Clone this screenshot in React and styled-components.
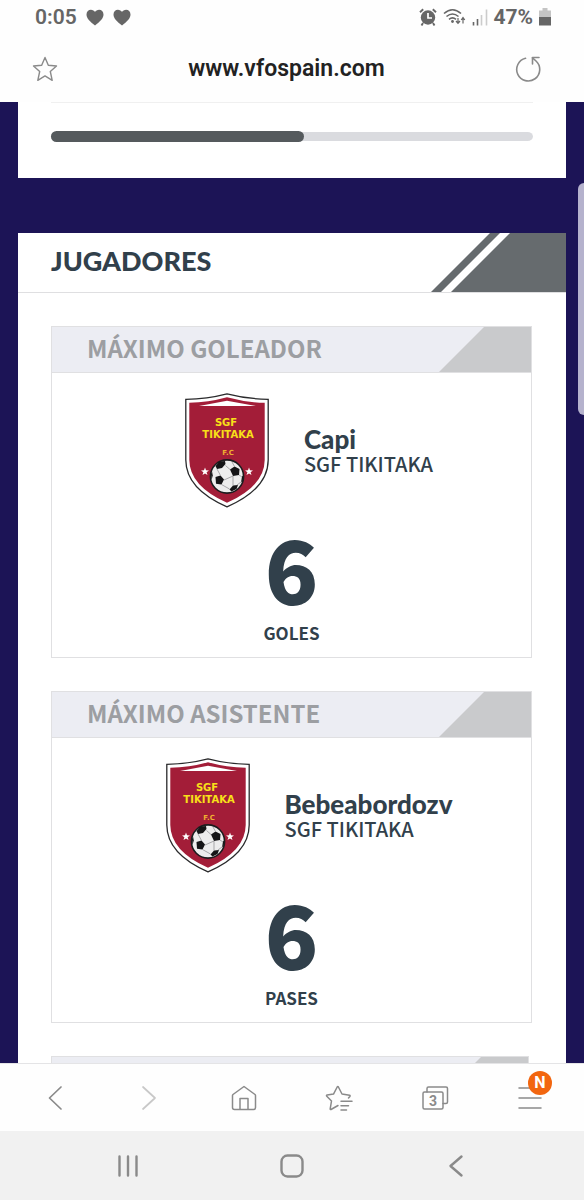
import styled, { createGlobalStyle, css } from 'styled-components';

const players = [
    { id: 1, title: 'MÁXIMO GOLEADOR', name: 'Capi', team: 'SGF TIKITAKA', total: 6, unit: 'GOLES' },
    { id: 2, title: 'MÁXIMO ASISTENTE', name: 'Bebeabordozv', team: 'SGF TIKITAKA', total: 6, unit: 'PASES' },
];

const App = () => {
    return (
        <Screen>
            <GlobalStyle />
            <StatusBar />
            <AddressBar />
            <Content>
                <Wrapper>
                    <Card>
                        <ProgressBox>
                            <Progress>
                                <ProgressFill style={{ width: '52.4%' }} />
                            </Progress>
                        </ProgressBox>
                    </Card>
                    <Card>
                        <CardHeader>
                            <CardTitle>JUGADORES</CardTitle>
                            <Stripes>
                                <Stripe />
                                <StripeEnd />
                            </Stripes>
                        </CardHeader>
                        <CardBody>
                            {players.map((player) => (
                                <Player key={player.id} player={player} />
                            ))}
                            <Panel $narrow>
                                <PanelHeader>
                                    <PanelTitle>PORTERÍA</PanelTitle>
                                    <Corner />
                                </PanelHeader>
                            </Panel>
                        </CardBody>
                    </Card>
                </Wrapper>
                <ScrollThumb />
            </Content>
            <BrowserBar />
            <SystemBar />
        </Screen>
    );
};

const StatusBar = () => {
    return (
        <Status>
            <StatusGroup>
                <span>0:05</span>
                <Heart />
                <Heart />
            </StatusGroup>
            <StatusIcons>
                <svg width="18" height="18" viewBox="0 0 18 18">
                    <circle cx="9" cy="9.500" r="7.200" fill="#666" />
                    <path d="M9 5v5h4" fill="none" stroke="#fff" strokeWidth="1.700" />
                    <path d="M1 4.200 4.200 1.200M17 4.200l-3.200-3M4 15l-1.500 2.500M14 15l1.500 2.500" stroke="#666" strokeWidth="1.900" />
                </svg>
                <svg width="23" height="18" viewBox="0 0 23 18">
                    <g fill="none" stroke="#666" strokeWidth="1.600">
                        <path d="M1 5.500Q9.500-2 18 5.500" />
                        <path d="M3.500 8.500q6-5 12 0" />
                        <path d="M6 11.300q3.500-2.800 7 0" />
                        <path d="M15 10v5M13 13l2 2.400 2-2.400M20 15.500V10M18.200 12l1.800-2.400 1.800 2.400" strokeWidth="1.200" />
                    </g>
                    <circle cx="9.500" cy="13.500" r="1.400" fill="#666" />
                </svg>
                <svg width="17" height="18" viewBox="0 0 17 18">
                    <path d="M1.500 14v3.500M5.500 11v6.500" stroke="#666" strokeWidth="1.600" />
                    <path d="M9.500 7v10.500M14.500 1.500v16" stroke="#ccc" strokeWidth="1.600" />
                </svg>
                <Percent>47%</Percent>
                <svg width="12" height="18" viewBox="0 0 12 18">
                    <path d="M3.500 0h5v2.500H12V9H0V2.500h3.500z" fill="#c4c4c4" />
                    <path d="M0 9h12v8.500H0z" fill="#666" />
                </svg>
            </StatusIcons>
        </Status>
    );
};

const Heart = () => (
    <svg width="18" height="17" viewBox="0 0 18 17">
        <path d="M9 16.500C4 12.500.5 9.500.5 5.500.5 2.500 2.500.8 4.900.8 6.700.8 8.200 1.700 9 3.100 9.800 1.700 11.300.8 13.100.8c2.400 0 4.400 1.700 4.400 4.700 0 4-3.500 7-8.500 11z" fill="#666" />
    </svg>
);

const AddressBar = () => {
    return (
        <Address>
            <IconButton type="button" aria-label="Favorito">
                <svg width="26" height="26" viewBox="0 0 26 26">
                    <path d="m13 1.500 3.300 7.700 8.200.8-6.200 5.500 1.900 8.800-7.200-4.400-7.200 4.400 1.900-8.800L1.500 10l8.200-.8z" {...line} strokeWidth="1.400" />
                </svg>
            </IconButton>
            <Url>www.vfospain.com</Url>
            <IconButton type="button" aria-label="Recargar">
                <svg width="26" height="26" viewBox="0 0 26 26">
                    <path d="M10.500 2.300A11.500 11.500 0 1 0 21 5L17.500 1.800" {...line} strokeWidth="1.600" />
                    <path d="M24 1.500h-6.500V8" {...line} strokeWidth="1.600" />
                </svg>
            </IconButton>
        </Address>
    );
};

const Player = ({ player }) => {
    return (
        <Panel>
            <PanelHeader>
                <PanelTitle>{player.title}</PanelTitle>
                <Corner />
            </PanelHeader>
            <PlayerRow>
                <Shield />
                <div>
                    <PlayerName>{player.name}</PlayerName>
                    <PlayerTeam>{player.team}</PlayerTeam>
                </div>
            </PlayerRow>
            <Total>{player.total}</Total>
            <Unit>{player.unit}</Unit>
        </Panel>
    );
};

const star = 'm0-4 1 2.800 3 .1-2.400 1.800.9 2.900L0 2 -2.500 3.600l.9-2.900L-4-1.100l3-.1z';

const Shield = () => (
    <svg width="84" height="115" viewBox="0 0 84 115">
        <path d="M42 .8Q22 6 .8 6.300V67Q1 96 42 113.800 83 96 83.200 67V6.300Q62 6 42 .8z" fill="#fff" stroke="#2a2a2c" strokeWidth="1.300" />
        <path d="M42 4.300Q23 9.500 4.300 9.800V67Q4.500 93 42 109.800 79.500 93 79.700 67V9.800Q61 9.500 42 4.300z" fill="#a31d38" />
        <path d="M42 7.800 71 13H14z" fill="#fff" />
        <g fontFamily="'DejaVu Sans', sans-serif" fontWeight="bold" textAnchor="middle">
            <text x="41" y="33" fontSize="10" fill="#f8e018">SGF</text>
            <text x="43" y="45" fontSize="10" fill="#f8e018">TIKITAKA</text>
            <text x="43" y="62" fontSize="7" fill="#f0b030">F.C</text>
        </g>
        <path d={star} transform="translate(20 78.500)" fill="#fff" />
        <path d={star} transform="translate(64 78.500)" fill="#fff" />
        <circle cx="42" cy="83.500" r="16.600" fill="#ededed" stroke="#1c1c1e" strokeWidth="1.600" />
        <g fill="#151517">
            <path d="m30.500 73 4-4.500 5.500-.5 .5 3-3.500 4-5 1z" />
            <path d="m45 76.500 4.500-3 5 2.500-.5 6-6 1z" />
            <path d="m30.500 84 5-1.500 3.500 4-2.500 5-5.500-.8z" />
            <path d="m44.500 96.500 3.500-4 5-.5-1.500 4-5 2.500z" />
            <path d="m26 81 1-2.500 .8 4L26.500 87z" />
            <path d="m57 83.500 1.300-1-.5 5-1.800 2z" />
        </g>
        <path d="M40.500 72.500l4.500 4M48 83l-9 4M32 76l3.500 6.500M54 82l3 2M36.500 91.500l8 4.500M52 92l4-3M48 83v9.500M49.500 73.500 47 69" fill="none" stroke="#8a8a8e" strokeWidth=".7" />
    </svg>
);

const BrowserBar = () => {
    return (
        <Toolbar>
            <IconButton type="button" aria-label="Atrás">
                <svg width="26" height="26" viewBox="0 0 26 26">
                    <path d="M19 2 7.500 13 19 24" {...line} strokeWidth="1.700" />
                </svg>
            </IconButton>
            <IconButton type="button" aria-label="Adelante">
                <svg width="26" height="26" viewBox="0 0 26 26">
                    <path d="m7 2 12 11L7 24" {...line} stroke="#c8c8c8" strokeWidth="1.700" />
                </svg>
            </IconButton>
            <IconButton type="button" aria-label="Inicio">
                <svg width="26" height="26" viewBox="0 0 26 26">
                    <path d="M13 1.500 24 9.500q.5.500.5 1V22.500q0 2-2 2h-19q-2 0-2-2v-12q0-.5.500-1zM9 24.500V13.500h8v11" {...line} />
                </svg>
            </IconButton>
            <IconButton type="button" aria-label="Favoritos">
                <svg width="28" height="26" viewBox="0 0 28 26">
                    <path d="M13 20.500 6 24.500q-.8.300-.8-.6L6.500 16 1.800 11.300q-.8-1 .4-1.200l6.300-1L12.200 2q.6-1 1.200 0L17 9l7.500 1.200q1 .3.400 1.200L23.500 13M16 16.200h11M16 20.700h7.500M16 25h5.500" {...line} />
                </svg>
            </IconButton>
            <IconButton type="button" aria-label="Pestañas">
                <svg width="28" height="26" viewBox="0 0 28 26">
                    <path d="M5 7V3.500Q5 2 6.500 2H24q1.500 0 1.500 1.500V17q0 1.500-1.500 1.500h-3" {...line} />
                    <rect x="1" y="7" width="20" height="17" rx="1.500" {...line} />
                    <text x="11" y="20.500" fontSize="14" fontWeight="bold" fontFamily="Roboto, sans-serif" textAnchor="middle" fill="#8a8a8a">3</text>
                </svg>
            </IconButton>
            <IconButton type="button" aria-label="Menú">
                <svg width="24" height="26" viewBox="0 0 24 26">
                    <path d="M1 3h22M1 13h22M1 23h22" {...line} />
                </svg>
                <Badge>N</Badge>
            </IconButton>
        </Toolbar>
    );
};

const SystemBar = () => {
    return (
        <System>
            <IconButton type="button" aria-label="Recientes">
                <svg width="24" height="24" viewBox="0 0 24 24">
                    <path d="M3.500 2.500v19M12 2.500v19M20.500 2.500v19" {...line} strokeWidth="2.400" />
                </svg>
            </IconButton>
            <IconButton type="button" aria-label="Pantalla de inicio">
                <svg width="24" height="24" viewBox="0 0 24 24">
                    <rect x="1.500" y="1.500" width="21" height="21" rx="6" {...line} strokeWidth="2.400" />
                </svg>
            </IconButton>
            <IconButton type="button" aria-label="Volver">
                <svg width="24" height="24" viewBox="0 0 24 24">
                    <path d="M17.500 2.500 6.500 12l11 9.500" {...line} strokeWidth="2.400" />
                </svg>
            </IconButton>
        </System>
    );
};

const line = {
    fill: 'none',
    stroke: '#8a8a8a',
    strokeWidth: 1.5,
    strokeLinejoin: 'round',
    strokeLinecap: 'round',
};

export default App;

const GlobalStyle = createGlobalStyle`
    * {
        box-sizing: border-box;
    }

    body {
        margin: 0;
        background-color: #fefefe;
        color: #31404b;
        font-family: "Noto Sans CJK SC", "Noto Sans", sans-serif;
    }

    svg {
        display: block;
        flex: none;
    }
`;

const Screen = styled.div`
    display: flex;
    flex-direction: column;
    height: 100vh;
`;

const Status = styled.div`
    display: flex;
    flex: none;
    align-items: center;
    justify-content: space-between;
    height: 34px;
    padding: 0 33px 0 35px;
    color: #666;
    font: 600 21px/34px Roboto, sans-serif;
`;

const StatusGroup = styled.div`
    display: flex;
    align-items: center;
    gap: 9px;
`;

const StatusIcons = styled.div`
    display: flex;
    align-items: center;
    gap: 6px;
`;

const Percent = styled.span`
    margin-left: -2px;
    font-weight: 700;
`;

const Address = styled.div`
    display: flex;
    flex: none;
    align-items: center;
    justify-content: space-between;
    height: 68px;
    padding: 2px 43px 0 32px;
`;

const IconButton = styled.button`
    position: relative;
    padding: 0;
    border: 0;
    background: none;
`;

const Url = styled.span`
    color: #222;
    font: 600 23px/32px Roboto, sans-serif;
`;

const Content = styled.main`
    position: relative;
    flex: 1;
    min-height: 0;
    overflow: hidden;
    background-color: #1c1456;
`;

const Wrapper = styled.div`
    display: flex;
    flex-direction: column;
    gap: 55px;
    padding: 0 18px;
`;

const Card = styled.section`
    background-color: #fff;
`;

const ProgressBox = styled.div`
    margin: 0 33px;
    padding: 28px 0 36px;
    border-top: 1px solid #f0f0f0;
`;

const Progress = styled.div`
    height: 11px;
    padding: 1px 0;
    border-radius: 6px;
    background-color: #dadbdf;
    background-clip: content-box;
`;

const ProgressFill = styled.div`
    height: 11px;
    margin-top: -1px;
    border-radius: 6px;
    background-color: #555a5d;
`;

const CardHeader = styled.header`
    display: flex;
    align-items: center;
    justify-content: space-between;
    height: 60px;
    padding-left: 33px;
    border-bottom: 1px solid #dfdfe1;
`;

const CardTitle = styled.h2`
    margin: 0;
    padding-bottom: 3px;
    font: 900 27px/32px Lato, sans-serif;
`;

const Stripes = styled.div`
    display: flex;
    align-self: stretch;
`;

const stripe = css`
    background-color: #666b6e;
`;

const Stripe = styled.div`
    ${stripe}
    width: 69px;
    clip-path: polygon(59px 0, 100% 0, 10px 100%, 0 100%);
`;

const StripeEnd = styled.div`
    ${stripe}
    width: 115px;
    margin-left: -49px;
    clip-path: polygon(59px 0, 100% 0, 100% 100%, 0 100%);
`;

const CardBody = styled.div`
    display: flex;
    flex-direction: column;
    gap: 33px;
    padding: 33px 34px 33px 33px;
`;

const Panel = styled.article`
    height: 332px;
    margin-right: ${({ $narrow }) => ($narrow ? '3px' : '0')};
    border: 1px solid #e0e0e2;
`;

const PanelHeader = styled.header`
    display: flex;
    align-items: center;
    justify-content: space-between;
    height: 46px;
    padding-left: 35px;
    border-bottom: 1px solid #e0e0e2;
    background-color: #ecedf3;
`;

const PanelTitle = styled.h3`
    margin: 0;
    padding-bottom: 4px;
    color: #9c9ea2;
    font-size: 24px;
    font-weight: 700;
    line-height: 36px;
    white-space: nowrap;
`;

const Corner = styled.div`
    align-self: stretch;
    width: 92px;
    flex: none;
    background-color: #c9cacc;
    clip-path: polygon(45px 0, 100% 0, 100% 100%, 0 100%);
`;

const PlayerRow = styled.div`
    display: flex;
    align-items: center;
    justify-content: center;
    gap: 35px;
    padding: 20px 0 0 35px;
`;

const PlayerName = styled.div`
    font: 900 26px/26px Lato, sans-serif;
`;

const PlayerTeam = styled.div`
    font-size: 20px;
    font-weight: 500;
    line-height: 24px;
`;

const Total = styled.div`
    margin-top: 11px;
    font-size: 88px;
    font-weight: 900;
    line-height: 96px;
    text-align: center;
`;

const Unit = styled.div`
    margin-top: 4px;
    font-size: 17px;
    font-weight: 700;
    line-height: 28px;
    text-align: center;
`;

const ScrollThumb = styled.div`
    position: absolute;
    top: 81px;
    right: -6px;
    width: 12px;
    height: 232px;
    border-radius: 6px;
    background-color: #b5b2cd;
`;

const Toolbar = styled.nav`
    display: flex;
    flex: none;
    align-items: center;
    justify-content: space-between;
    height: 68px;
    padding: 0 42px;
    border-top: 1px solid #e4e4e6;
`;

const Badge = styled.span`
    position: absolute;
    top: -14px;
    right: -10px;
    width: 24px;
    height: 24px;
    border-radius: 50%;
    background-color: #f2660f;
    color: #fff;
    font: 700 16px/24px Roboto, sans-serif;
    text-align: center;
`;

const System = styled.nav`
    display: flex;
    flex: none;
    align-items: center;
    justify-content: space-between;
    height: 69px;
    padding: 0 116px;
    background-color: #f1f1f1;
`;
